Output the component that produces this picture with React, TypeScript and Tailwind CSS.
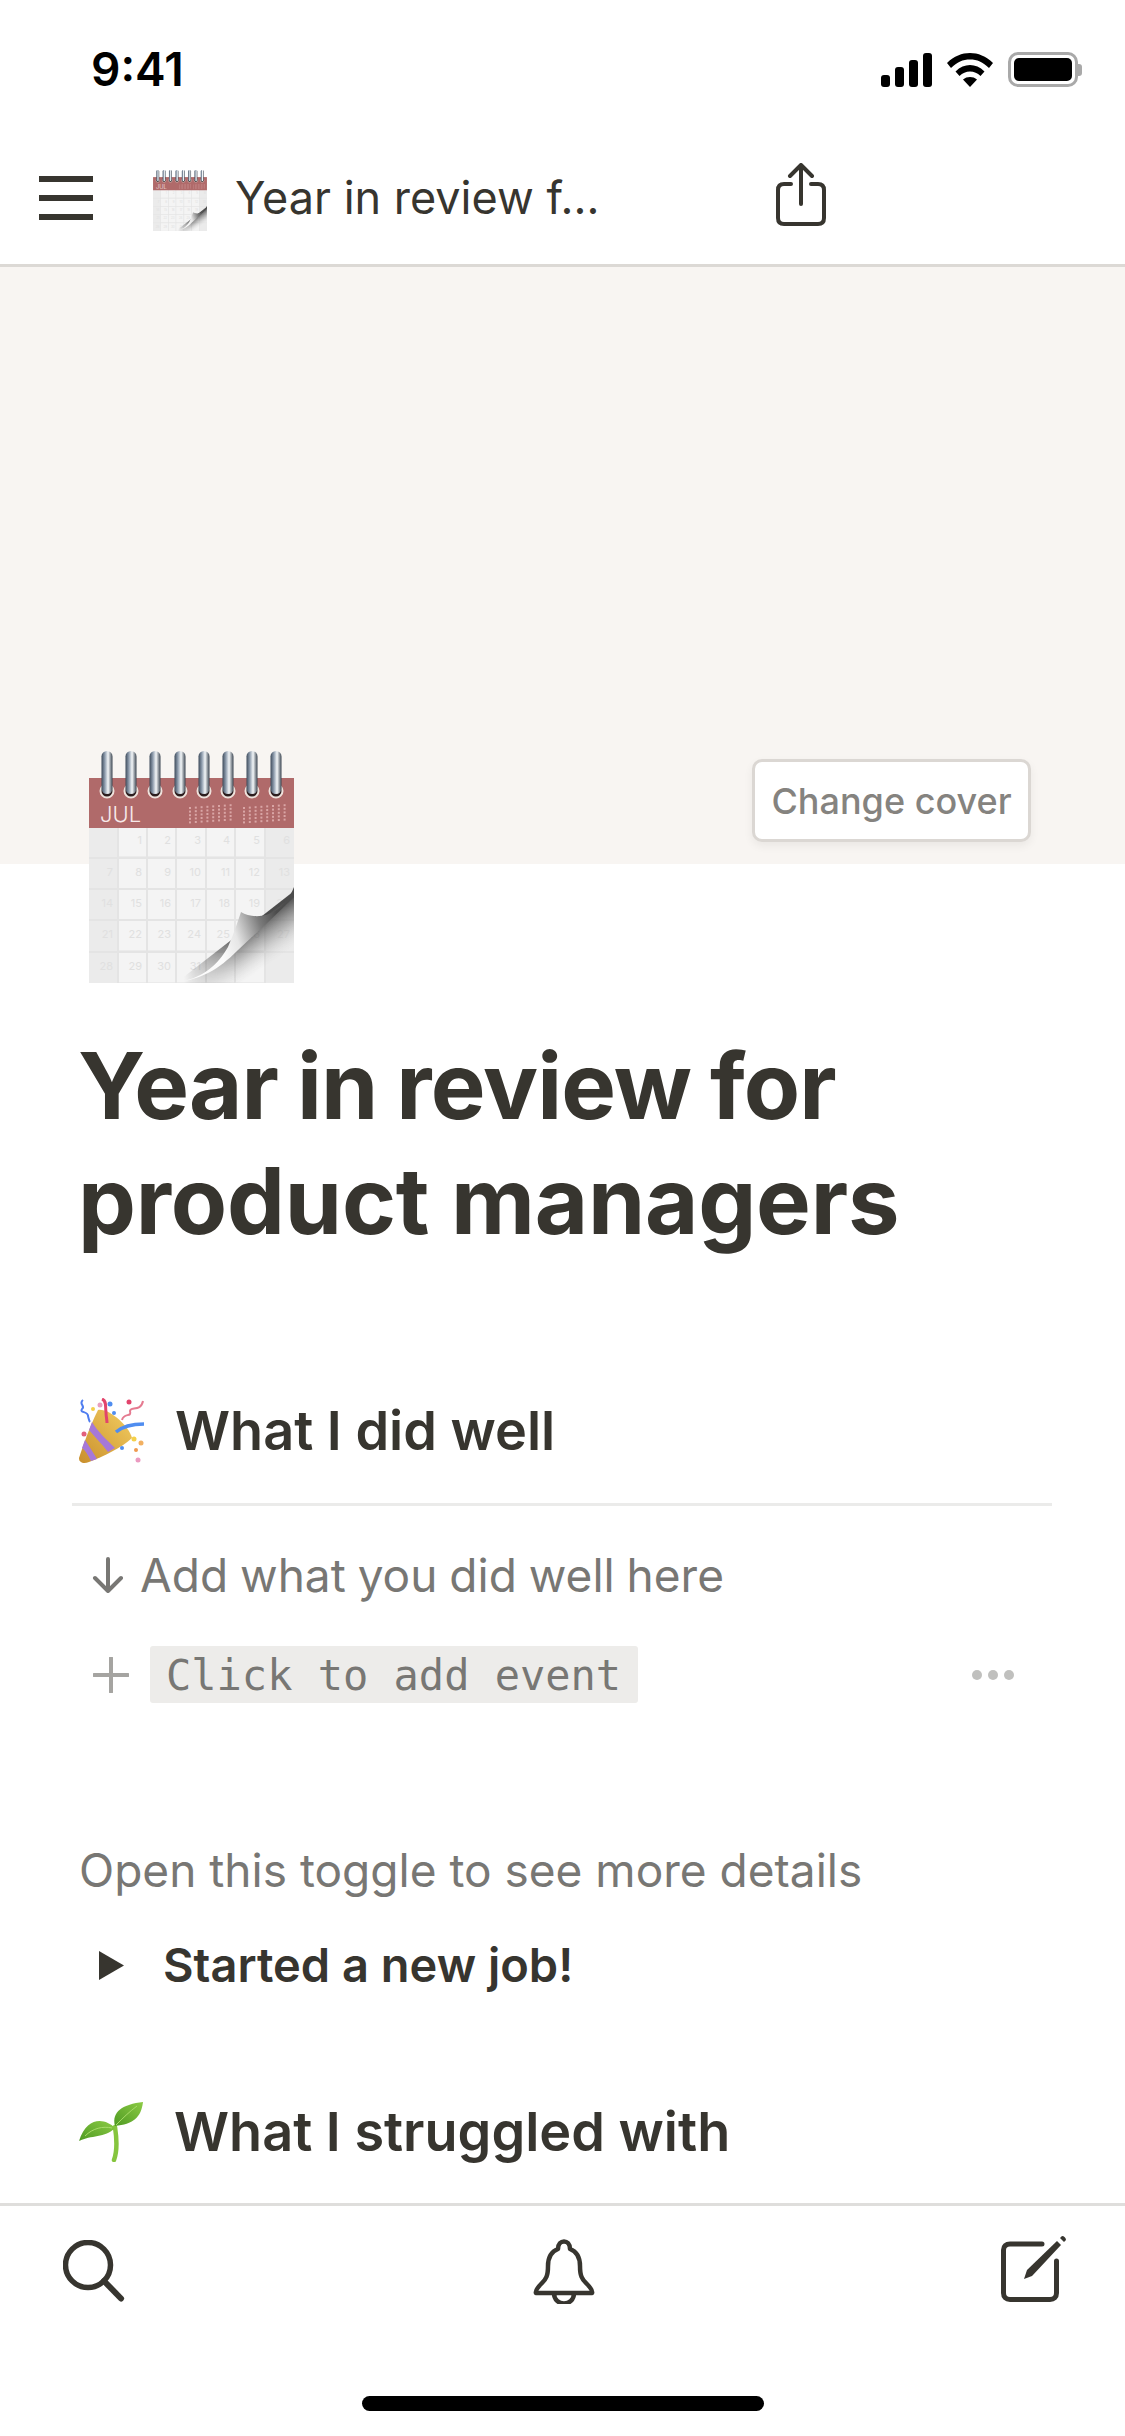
const INK = "#37352f";

function CalendarIcon({ className }: { className?: string }) {
  const vLines = [29, 58, 87, 117, 146, 176];
  const hLines = [107, 138, 169, 201];
  const left = [0, 30, 59, 88, 118, 147, 177];
  const right = [28, 57, 86, 116, 145, 175, 205];
  const top = [76, 108, 139, 170, 202];
  const nums = [
    ["", "1", "2", "3", "4", "5", "6"],
    ["7", "8", "9", "10", "11", "12", "13"],
    ["14", "15", "16", "17", "18", "19", "20"],
    ["21", "22", "23", "24", "25", "26", "27"],
    ["28", "29", "30", "31", "", "", ""],
  ];
  const ringX = [18, 42, 66, 91, 115, 139, 163, 187];
  return (
    <svg viewBox="0 0 205 232" className={className}>
      <defs>
        <linearGradient id="ring" x1="0" x2="1" y1="0" y2="0">
          <stop offset="0" stopColor="#3d4a5a" />
          <stop offset="0.3" stopColor="#8d9bac" />
          <stop offset="0.6" stopColor="#f4f7f9" />
          <stop offset="1" stopColor="#3a4450" />
        </linearGradient>
        <linearGradient id="flap" gradientUnits="userSpaceOnUse" x1="128" y1="190" x2="190" y2="168">
          <stop offset="0" stopColor="#fbfbfb" />
          <stop offset="0.3" stopColor="#e6e6e6" />
          <stop offset="0.7" stopColor="#7c7c7c" />
          <stop offset="1" stopColor="#4c4c4c" />
        </linearGradient>
        <linearGradient id="shadow" gradientUnits="userSpaceOnUse" x1="146" y1="186" x2="170" y2="220">
          <stop offset="0" stopColor="#3a3a3a" stopOpacity="0.9" />
          <stop offset="0.5" stopColor="#777777" stopOpacity="0.45" />
          <stop offset="1" stopColor="#cccccc" stopOpacity="0" />
        </linearGradient>
        <linearGradient id="fadeGrad" gradientUnits="userSpaceOnUse" x1="95" y1="0" x2="150" y2="0">
          <stop offset="0" stopColor="#000000" />
          <stop offset="1" stopColor="#ffffff" />
        </linearGradient>
        <mask id="fade" maskUnits="userSpaceOnUse" x="0" y="0" width="205" height="232">
          <rect x="0" y="0" width="205" height="232" fill="url(#fadeGrad)" />
        </mask>
      </defs>
      <rect x="0" y="76" width="205" height="156" fill="#ebebeb" />
      {top.map((t, r) =>
        left.map((l, c) => (
          <g key={`${r}-${c}`}>
            {c > 0 && c < 6 ? (
              <rect x={l} y={t} width={right[c] - l} height="29" fill="#f4f4f4" />
            ) : null}
            <text
              x={right[c] - 4}
              y={t + 17}
              fontSize="11"
              textAnchor="end"
              fill="#e0e0e0"
              fontFamily="Inter, sans-serif"
            >
              {nums[r][c]}
            </text>
          </g>
        ))
      )}
      {vLines.map((x) => (
        <rect key={x} x={x - 1} y="76" width="2" height="156" fill="#e4e4e4" />
      ))}
      {hLines.map((y) => (
        <rect key={y} x="0" y={y - 1} width="205" height="2" fill="#e4e4e4" />
      ))}
      <path d="M 87 232 L 205 140 L 205 205 L 160 232 Z" fill="url(#shadow)" mask="url(#fade)" />
      <path
        d="M 87 231 C 112 229 129 214 139 196 C 145 182 149 170 152 161 C 165 169 192 168 205 136 L 205 146 C 185 166 165 184 148 200 C 130 218 112 229 87 231 Z"
        fill="url(#flap)"
      />
      <rect x="0" y="27" width="205" height="50" fill="#b06a6a" />
      <text x="11" y="71" fontSize="22" fontWeight="300" fill="#f7e9e9" fontFamily="Inter, sans-serif">
        JUL
      </text>
      {[0, 1].map((b) =>
        [0, 1, 2, 3, 4, 5, 6, 7].map((c) =>
          [0, 1, 2, 3, 4].map((r) => (
            <rect
              key={`${b}-${c}-${r}`}
              x={100 + b * 54 + c * 5.8}
              y={56 + r * 3.6 - c * 0.4}
              width="2"
              height="2"
              fill="#d9a5a5"
            />
          ))
        )
      )}
      {ringX.map((x) => (
        <g key={x}>
          <circle cx={x} cy="40" r="6.5" fill="#2c1d1e" stroke="#eee2dc" strokeWidth="2" />
          <rect x={x - 5.5} y="0" width="11" height="43" rx="5.5" fill="url(#ring)" />
        </g>
      ))}
    </svg>
  );
}

function PartyPopper() {
  return (
    <svg viewBox="0 0 66 66" className="w-[66px] h-[66px] shrink-0">
      <defs>
        <linearGradient id="cone" x1="0" y1="1" x2="1" y2="0">
          <stop offset="0" stopColor="#c98f2c" />
          <stop offset="1" stopColor="#f3ce62" />
        </linearGradient>
      </defs>
      <path d="M 19 12 C 10 30 4 48 0 60 C 0 65 5 66 10 64 C 25 58 42 50 53 40 C 50 28 30 10 19 12 Z" fill="url(#cone)" />
      <path d="M 13 24 C 18 33 28 42 36 50 L 29 54 C 22 45 15 38 10 32 Z" fill="#a678d8" />
      <path d="M 6 42 C 10 48 14 54 18 61 L 12 63 C 9 57 6 52 3 50 Z" fill="#a678d8" />
      <path d="M 37 34 C 44 28 54 26 65 26" fill="none" stroke="#4f8df0" strokeWidth="3.5" />
      <path d="M 23 1 C 28 3 26 8 27 14 C 27 18 28 22 28 25" fill="none" stroke="#e2446c" strokeWidth="3" />
      <path d="M 4 2 C -1 6 7 8 3 11 C 0 15 9 13 9 18 C 10 22 10 23 11 24" fill="none" stroke="#4f7df0" strokeWidth="2" />
      <path d="M 43 22 C 45 14 53 20 51 13 C 51 8 62 14 64 3" fill="none" stroke="#e57a90" strokeWidth="2" />
      <circle cx="31" cy="6" r="2.5" fill="#4f8df0" />
      <circle cx="21" cy="7" r="2.5" fill="#e8a0c0" />
      <circle cx="50" cy="4" r="2.5" fill="#e2446c" />
      <circle cx="14" cy="11" r="2" fill="#f4d04a" />
      <circle cx="35" cy="15" r="2" fill="#4f8df0" />
      <circle cx="5" cy="36" r="2.5" fill="#e2607c" />
      <circle cx="62" cy="45" r="2.5" fill="#f2b061" />
      <circle cx="55" cy="41" r="2.5" fill="#f4d04a" />
      <circle cx="43" cy="50" r="2" fill="#4f8df0" />
      <circle cx="57" cy="52" r="2" fill="#ef9a50" />
      <circle cx="59" cy="62" r="2.5" fill="#eb9ac0" />
    </svg>
  );
}

function Seedling() {
  return (
    <svg viewBox="0 0 66 60" className="w-[66px] h-[60px] shrink-0">
      <defs>
        <linearGradient id="leaf" x1="0" y1="1" x2="1" y2="0">
          <stop offset="0" stopColor="#4e9a22" />
          <stop offset="1" stopColor="#8ccb45" />
        </linearGradient>
      </defs>
      <path d="M 36 25 C 38 38 38 50 35 58" fill="none" stroke="#86c53e" strokeWidth="4.5" strokeLinecap="round" />
      <path d="M 36 26 C 26 16 8 14 0 39 C 12 33 26 36 36 26 Z" fill="url(#leaf)" />
      <path d="M 36 24 C 32 10 44 2 64 0 C 62 16 54 22 36 24 Z" fill="url(#leaf)" />
      <path d="M 37 23 C 44 16 50 10 58 4" fill="none" stroke="#a9dc6a" strokeWidth="1" />
      <path d="M 33 26 C 24 24 14 26 6 34" fill="none" stroke="#a9dc6a" strokeWidth="1" />
    </svg>
  );
}

function ShareIcon() {
  return (
    <svg viewBox="0 0 50 63" className="w-[50px] h-[63px]" fill="none" stroke={INK} strokeWidth="4">
      <path d="M 25 3 V 41" strokeLinecap="round" />
      <path d="M 14 13 L 25 2 L 36 13" strokeLinecap="round" strokeLinejoin="round" />
      <path d="M 15 21 H 8 C 4 21 2 23 2 27 V 55 C 2 59 4 61 8 61 H 42 C 46 61 48 59 48 55 V 27 C 48 23 46 21 42 21 H 35" strokeLinecap="round" />
    </svg>
  );
}

function Wifi() {
  return (
    <svg viewBox="0 0 46 34" className="w-[46px] h-[34px]" fill="black">
      <path d="M 23 0 C 31 0 39 3 46 10 L 42 15 C 36 9 30 6.5 23 6.5 C 16 6.5 10 9 4 15 L 0 10 C 7 3 15 0 23 0 Z" />
      <path d="M 23 12 C 28 12 33 14 37.5 18.5 L 33.5 23 C 30.5 20 27 18.5 23 18.5 C 19 18.5 15.5 20 12.5 23 L 8.5 18.5 C 13 14 18 12 23 12 Z" />
      <path d="M 16 26.5 C 18 24.8 20.5 24 23 24 C 25.5 24 28 24.8 30 26.5 L 23 34 Z" />
    </svg>
  );
}

function SearchIcon() {
  return (
    <svg viewBox="0 0 62 62" className="w-[62px] h-[62px]" fill="none" stroke={INK} strokeWidth="5.5">
      <circle cx="25" cy="25" r="22.5" />
      <path d="M 41 41 L 58 58.5" strokeLinecap="round" strokeWidth="6" />
    </svg>
  );
}

function BellIcon() {
  return (
    <svg viewBox="0 0 62 68" className="w-[62px] h-[68px]" fill="none" stroke={INK} strokeWidth="4.5" strokeLinejoin="round">
      <path d="M 25 13 C 25 3 37 3 37 13 C 45 16 47 22 47 30 C 47 40 49 43 53 47 C 58 52 60 55 59 57 H 3 C 2 55 4 52 9 47 C 13 43 15 40 15 30 C 15 22 17 16 25 13 Z" />
      <path d="M 21 57 C 21 71 41 71 41 57" />
    </svg>
  );
}

function ComposeIcon() {
  return (
    <svg viewBox="0 0 66 66" className="w-[66px] h-[66px]" fill="none" stroke={INK}>
      <path d="M 41 8 H 9 C 5 8 2.5 10.5 2.5 14 V 57 C 2.5 61 5 63.5 9 63.5 H 49 C 53 63.5 55.5 61 55.5 57 V 25" strokeWidth="5" strokeLinecap="round" />
      <path d="M 23 43 L 26 34 L 56 5 L 60 9 L 31 40 Z" fill={INK} stroke="none" />
      <path d="M 59 2 L 61 0 C 63 0 65 2 65 4 L 63 6 Z" fill={INK} stroke="none" />
    </svg>
  );
}

export default function App() {
  return (
    <div
      className="w-[1125px] h-[2436px] flex flex-col bg-white overflow-hidden text-[#37352f]"
      style={{ fontFamily: "Inter, 'Liberation Sans', sans-serif" }}
    >
      {/* status bar */}
      <div className="h-[137px] shrink-0 flex justify-between items-start pt-[44px] pl-[91px] pr-[43px]">
        <span className="text-[46px] leading-[50px] font-semibold text-black">9:41</span>
        <div className="flex items-center gap-[15px] mt-[8px]">
          <div className="flex items-end gap-[5px] h-[34px]">
            <span className="w-[9px] h-[12px] bg-black rounded-[3px]" />
            <span className="w-[9px] h-[20px] bg-black rounded-[3px]" />
            <span className="w-[9px] h-[27px] bg-black rounded-[3px]" />
            <span className="w-[9px] h-[34px] bg-black rounded-[3px]" />
          </div>
          <Wifi />
          <div className="flex items-center">
            <div className="w-[70px] h-[35px] rounded-[10px] border-[3px] border-[#a9a9a9] p-[3px]">
              <div className="w-full h-full bg-black rounded-[5px]" />
            </div>
            <span className="w-[4px] h-[12px] bg-[#a9a9a9] rounded-r-[3px]" />
          </div>
        </div>
      </div>

      {/* nav bar */}
      <div className="h-[130px] shrink-0 flex items-start border-b-[3px] border-[#dcd9d5] pl-[39px]">
        <div className="mt-[39px] w-[54px] flex flex-col gap-[13px]">
          <span className="h-[6px] bg-[#37352f]" />
          <span className="h-[6px] bg-[#37352f]" />
          <span className="h-[6px] bg-[#37352f]" />
        </div>
        <CalendarIcon className="ml-[60px] mt-[33px] w-[54px] h-[61px]" />
        <span className="ml-[28px] mt-[31px] w-[390px] text-[45px] leading-[60px] whitespace-nowrap">
          Year in review f...
        </span>
        <div className="ml-[151px] mt-[26px]">
          <ShareIcon />
        </div>
      </div>

      {/* scrolling page */}
      <div className="flex-1 min-h-0 overflow-hidden">
        <div className="h-[597px] bg-[#f8f5f2] relative">
          <button className="absolute left-[752px] top-[492px] w-[279px] h-[83px] bg-white rounded-[10px] border-[3px] border-[#dbd7d3] shadow-[0_4px_10px_rgba(0,0,0,0.06)] text-[36px] font-medium text-[#85837f] flex items-center justify-center">
            Change cover
          </button>
          <CalendarIcon className="absolute left-[89px] top-[484px] w-[205px] h-[232px]" />
        </div>

        <h1 className="mt-[164px] ml-[78px] text-[92px] leading-[115px] font-bold text-[#37352f]">
          <span className="block tracking-[-0.9px] [word-spacing:-2px]">Year in review for</span>
          <span className="block tracking-[-0.2px]">product managers</span>
        </h1>

        <div className="mt-[140px] ml-[79px] flex items-center gap-[30px] h-[66px]">
          <PartyPopper />
          <h2 className="text-[54px] leading-[66px] font-semibold">What I did well</h2>
        </div>
        <div className="mt-[39px] ml-[72px] w-[980px] h-[3px] bg-[#ebebea]" />

        <div className="mt-[41px] ml-[92px] flex items-center gap-[16px] text-[46px] leading-[56px] text-[#787774] [word-spacing:-1px]">
          <svg viewBox="0 0 32 36" className="w-[32px] h-[36px]" fill="none" stroke="#787774" strokeWidth="4" strokeLinecap="round" strokeLinejoin="round">
            <path d="M 16 2 V 33 M 3 21 L 16 34 L 29 21" />
          </svg>
          <span>Add what you did well here</span>
        </div>

        <div className="mt-[43px] ml-[93px] h-[57px] flex items-center">
          <svg viewBox="0 0 36 36" className="w-[36px] h-[36px]" stroke="#a5a4a1" strokeWidth="4" strokeLinecap="round">
            <path d="M 18 1 V 35 M 1 18 H 35" />
          </svg>
          <span className="ml-[21px] h-[57px] w-[488px] pl-[16px] bg-[#edecea] rounded-[3px] text-[42px] leading-[60px] text-[#787774] whitespace-nowrap font-['DejaVu_Sans_Mono',monospace]">
            Click to add event
          </span>
          <div className="ml-[334px] flex gap-[6px]">
            <span className="w-[10px] h-[10px] rounded-full bg-[#c0c0be]" />
            <span className="w-[10px] h-[10px] rounded-full bg-[#c0c0be]" />
            <span className="w-[10px] h-[10px] rounded-full bg-[#c0c0be]" />
          </div>
        </div>

        <p className="mt-[139px] ml-[79px] text-[46px] leading-[56px] text-[#787774]">
          Open this toggle to see more details
        </p>

        <div className="mt-[39px] ml-[99px] flex items-center h-[56px]">
          <svg viewBox="0 0 25 29" className="w-[25px] h-[29px]" fill="#37352f">
            <path d="M 0 0 L 25 14.5 L 0 29 Z" />
          </svg>
          <span className="ml-[39px] text-[47px] leading-[56px] font-semibold whitespace-nowrap">Started a new job!</span>
        </div>

        <div className="mt-[106px] ml-[79px] flex items-center gap-[29px] h-[66px]">
          <Seedling />
          <h2 className="text-[54px] leading-[66px] font-semibold">What I struggled with</h2>
        </div>
      </div>

      {/* bottom bar */}
      <div className="h-[233px] shrink-0 border-t-[3px] border-[#dfdedc] bg-white flex flex-col">
        <div className="flex items-start pl-[63px] pt-[30px]">
          <div className="mt-[4px]">
            <SearchIcon />
          </div>
          <div className="ml-[408px]">
            <BellIcon />
          </div>
          <div className="ml-[406px]">
            <ComposeIcon />
          </div>
        </div>
        <div className="mt-[92px] mx-auto w-[402px] h-[15px] rounded-full bg-black" />
      </div>
    </div>
  );
}
